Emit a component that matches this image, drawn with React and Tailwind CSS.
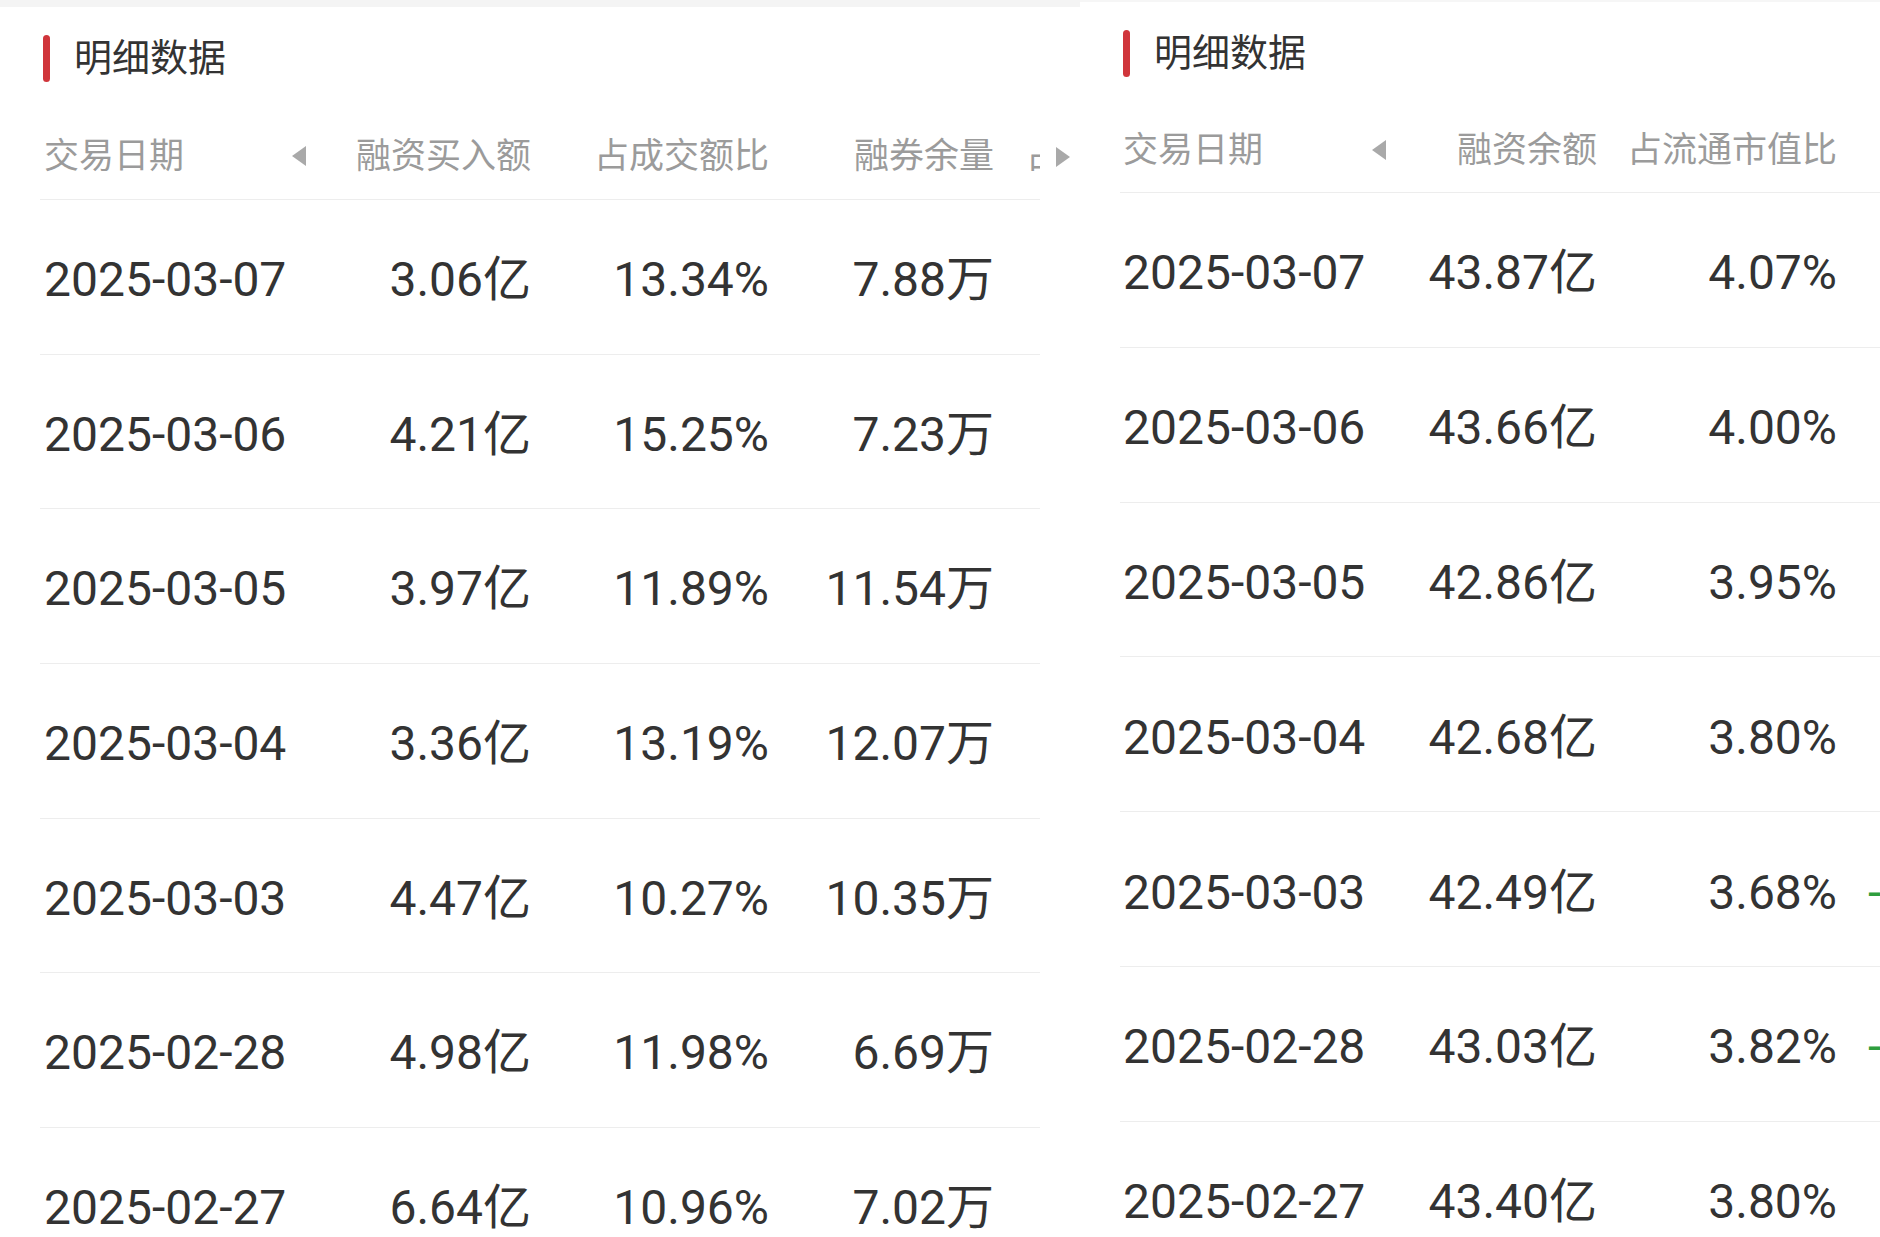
import React from 'react';

const leftRows = [
  ['2025-03-07', '3.06亿', '13.34%', '7.88万'],
  ['2025-03-06', '4.21亿', '15.25%', '7.23万'],
  ['2025-03-05', '3.97亿', '11.89%', '11.54万'],
  ['2025-03-04', '3.36亿', '13.19%', '12.07万'],
  ['2025-03-03', '4.47亿', '10.27%', '10.35万'],
  ['2025-02-28', '4.98亿', '11.98%', '6.69万'],
  ['2025-02-27', '6.64亿', '10.96%', '7.02万'],
];

const rightRows = [
  ['2025-03-07', '43.87亿', '4.07%', false],
  ['2025-03-06', '43.66亿', '4.00%', false],
  ['2025-03-05', '42.86亿', '3.95%', false],
  ['2025-03-04', '42.68亿', '3.80%', false],
  ['2025-03-03', '42.49亿', '3.68%', true],
  ['2025-02-28', '43.03亿', '3.82%', true],
  ['2025-02-27', '43.40亿', '3.80%', false],
];

const FONT = "font-['Roboto','Noto_Sans_CJK_SC',sans-serif]";

// little scroll hint triangles next to the header
const Arrow = ({ dir = 'left' }) => (
  <svg width="16" height="22" viewBox="0 0 16 22" className="shrink-0 block">
    {dir === 'left' ? (
      <polygon points="15,1 15,21 1,11" fill="#a9a9a9" />
    ) : (
      <polygon points="1,1 1,21 15,11" fill="#a9a9a9" />
    )}
  </svg>
);

const Title = ({ className }) => (
  <div className={`flex items-center ${className}`}>
    <div className="w-[7px] h-[47px] rounded-full bg-[#d0353b]" />
    <span className="ml-[24px] text-[38px] leading-none text-[#333]">明细数据</span>
  </div>
);

const LeftPanel = () => (
  <div className="w-[1080px] shrink-0 bg-white">
    <div className="h-[7px] bg-[#f4f4f4]" />
    <Title className="h-[102px] pl-[43px]" />
    <div className="flex">
      <div className="ml-[40px] w-[1000px] overflow-hidden">
        {/* header */}
        <div className="grid grid-cols-[270px_221px_238px_225px_46px] h-[91px] items-center pt-[4px] border-b border-[#ededed] text-[35px] leading-none text-[#9b9b9b]">
          <div className="flex items-center justify-between pl-[4px] pr-[3px]">
            <span>交易日期</span>
            <Arrow dir="left" />
          </div>
          <div className="text-right">融资买入额</div>
          <div className="text-right">占成交额比</div>
          <div className="text-right">融券余量</div>
          <div className="pl-[32px] whitespace-nowrap overflow-hidden">占流通市值比</div>
        </div>
        {/* rows */}
        {leftRows.map((r) => (
          <div
            key={r[0]}
            className="grid grid-cols-[270px_221px_238px_225px_46px] h-[154.7px] items-center pt-[6px] border-b border-[#ededed] text-[48px] leading-none text-[#333]"
          >
            <div className="pl-[4px]">{r[0]}</div>
            <div className="text-right">{r[1]}</div>
            <div className="text-right">{r[2]}</div>
            <div className="text-right">{r[3]}</div>
            <div />
          </div>
        ))}
      </div>
      <div className="w-[40px]">
        <div className="h-[91px] flex items-center pt-[4px] pl-[15px]">
          <Arrow dir="right" />
        </div>
      </div>
    </div>
  </div>
);

const RightPanel = () => (
  <div className="w-[800px] shrink-0 bg-white">
    <div className="h-[2px] bg-[#f6f6f6]" />
    <Title className="h-[102px] pl-[43px]" />
    <div className="ml-[40px]">
      <div className="grid grid-cols-[270px_207px_240px_43px] h-[89px] items-center pt-[4px] border-b border-[#ededed] text-[35px] leading-none text-[#9b9b9b]">
        <div className="flex items-center justify-between pl-[3px] pr-[3px]">
          <span>交易日期</span>
          <Arrow dir="left" />
        </div>
        <div className="text-right">融资余额</div>
        <div className="text-right whitespace-nowrap">占流通市值比</div>
        <div />
      </div>
      {rightRows.map((r) => (
        <div
          key={r[0]}
          className="grid grid-cols-[270px_207px_240px_43px] h-[154.8px] items-center pt-[7px] border-b border-[#ededed] text-[48px] leading-none text-[#333]"
        >
          <div className="pl-[3px]">{r[0]}</div>
          <div className="text-right">{r[1]}</div>
          <div className="text-right">{r[2]}</div>
          <div className="pl-[31px] text-[#2e9e3e] overflow-hidden whitespace-nowrap">{r[3] ? '-' : ''}</div>
        </div>
      ))}
    </div>
  </div>
);

export default function App() {
  return (
    <div className={`w-[1880px] h-[1237px] overflow-hidden flex bg-white ${FONT}`}>
      <LeftPanel />
      <RightPanel />
    </div>
  );
}
